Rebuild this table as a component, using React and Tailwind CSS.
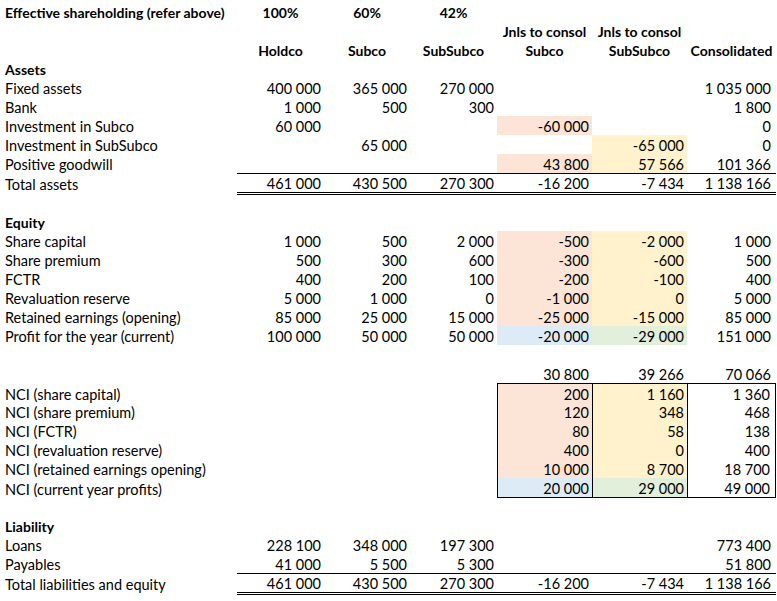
import React from "react";

const P = "bg-[#fce4d6]";
const Y = "bg-[#fff2cc]";
const B = "bg-[#ddebf7]";
const G = "bg-[#e2efda]";

const rows = [
  { type: "pct" },
  { type: "jnls" },
  { type: "head" },
  { label: "Assets", bold: true },
  { label: "Fixed assets", v: ["400 000", "365 000", "270 000", "", "", "1 035 000"] },
  { label: "Bank", v: ["1 000", "500", "300", "", "", "1 800"] },
  { label: "Investment in Subco", v: ["60 000", "", "", "-60 000", "", "0"], bg: [null, null, null, P, null, null] },
  { label: "Investment in SubSubco", v: ["", "65 000", "", "", "-65 000", "0"], bg: [null, null, null, null, Y, null] },
  { label: "Positive goodwill", v: ["", "", "", "43 800", "57 566", "101 366"], bg: [null, null, null, P, Y, null] },
  { label: "Total assets", v: ["461 000", "430 500", "270 300", "-16 200", "-7 434", "1 138 166"], total: true },
  { blank: true, h: "h-[17px]" },
  { label: "Equity", bold: true },
  { label: "Share capital", v: ["1 000", "500", "2 000", "-500", "-2 000", "1 000"], bg: [null, null, null, P, Y, null] },
  { label: "Share premium", v: ["500", "300", "600", "-300", "-600", "500"], bg: [null, null, null, P, Y, null] },
  { label: "FCTR", v: ["400", "200", "100", "-200", "-100", "400"], bg: [null, null, null, P, Y, null] },
  { label: "Revaluation reserve", v: ["5 000", "1 000", "0", "-1 000", "0", "5 000"], bg: [null, null, null, P, Y, null] },
  { label: "Retained earnings (opening)", v: ["85 000", "25 000", "15 000", "-25 000", "-15 000", "85 000"], bg: [null, null, null, P, Y, null] },
  { label: "Profit for the year (current)", v: ["100 000", "50 000", "50 000", "-20 000", "-29 000", "151 000"], bg: [null, null, null, B, G, null] },
  { blank: true },
  { label: "", v: ["", "", "", "30 800", "39 266", "70 066"] },
  { label: "NCI (share capital)", v: ["", "", "", "200", "1 160", "1 360"], bg: [null, null, null, P, Y, null], box: "top" },
  { label: "NCI (share premium)", v: ["", "", "", "120", "348", "468"], bg: [null, null, null, P, Y, null], box: "mid" },
  { label: "NCI (FCTR)", v: ["", "", "", "80", "58", "138"], bg: [null, null, null, P, Y, null], box: "mid" },
  { label: "NCI (revaluation reserve)", v: ["", "", "", "400", "0", "400"], bg: [null, null, null, P, Y, null], box: "mid" },
  { label: "NCI (retained earnings opening)", v: ["", "", "", "10 000", "8 700", "18 700"], bg: [null, null, null, P, Y, null], box: "mid" },
  { label: "NCI (current year profits)", v: ["", "", "", "20 000", "29 000", "49 000"], bg: [null, null, null, B, G, null], box: "bottom" },
  { blank: true },
  { label: "Liability", bold: true },
  { label: "Loans", v: ["228 100", "348 000", "197 300", "", "", "773 400"] },
  { label: "Payables", v: ["41 000", "5 500", "5 300", "", "", "51 800"] },
  { label: "Total liabilities and equity", v: ["461 000", "430 500", "270 300", "-16 200", "-7 434", "1 138 166"], total: true },
];

const grid = "grid grid-cols-[237px_87px_86px_87px_95px_95px_89px]";

function nb(s) {
  return s.replace(/ /g, "\u00a0");
}

function Row({ r }) {
  if (r.blank) return <div className={`${r.h || "h-[19px]"}`} />;
  if (r.type === "pct") {
    return (
      <div className={`${grid} h-[19px] items-center pt-[2px] font-bold text-[14px]`}>
        <div className="pl-[5px] whitespace-nowrap">Effective shareholding (refer above)</div>
        <div className="text-center">100%</div>
        <div className="text-center">60%</div>
        <div className="text-center">42%</div>
        <div />
        <div />
        <div />
      </div>
    );
  }
  if (r.type === "jnls") {
    return (
      <div className={`${grid} h-[19px] items-center pt-[2px] font-bold text-[14px]`}>
        <div />
        <div />
        <div />
        <div />
        <div className="text-center whitespace-nowrap">Jnls to consol</div>
        <div className="text-center whitespace-nowrap">Jnls to consol</div>
        <div />
      </div>
    );
  }
  if (r.type === "head") {
    return (
      <div className={`${grid} h-[19px] items-center pt-[2px] font-bold text-[14px]`}>
        <div />
        <div className="text-center">Holdco</div>
        <div className="text-center">Subco</div>
        <div className="text-center">SubSubco</div>
        <div className="text-center">Subco</div>
        <div className="text-center">SubSubco</div>
        <div className="text-center whitespace-nowrap">Consolidated</div>
      </div>
    );
  }
  const v = r.v || ["", "", "", "", "", ""];
  const bg = r.bg || [null, null, null, null, null, null];
  const h = r.total ? "h-[22px]" : "h-[19px]";
  const pt = r.total ? "" : " pt-[2px]";
  return (
    <div className={`${grid} ${h}`}>
      <div className={`pl-[5px] whitespace-nowrap flex items-center${pt} ${r.bold ? "font-bold text-[14px]" : ""}`}>{r.label}</div>
      {v.map((val, i) => {
        let cls = "flex items-center justify-end whitespace-nowrap" + pt;
        cls += i === 5 ? " pr-[5px]" : " pr-[3px]";
        if (bg[i]) cls += " " + bg[i];
        if (r.total) cls += " border-t border-black border-b-[3px] border-b-black border-double";
        if (r.box && i >= 3) {
          cls += " border-l border-black";
          if (i === 5) cls += " border-r pr-[4px]";
          if (r.box === "top") cls += " border-t";
          if (r.box === "bottom") cls += " border-b";
        }
        return (
          <div key={i} className={cls}>
            {nb(val)}
          </div>
        );
      })}
    </div>
  );
}

export default function App() {
  return (
    <div className="w-[777px] h-[601px] bg-white text-black pt-[2px] text-[14.5px] leading-[17px] font-['Lato',sans-serif] overflow-hidden">
      {rows.map((r, i) => (
        <Row key={i} r={r} />
      ))}
    </div>
  );
}
